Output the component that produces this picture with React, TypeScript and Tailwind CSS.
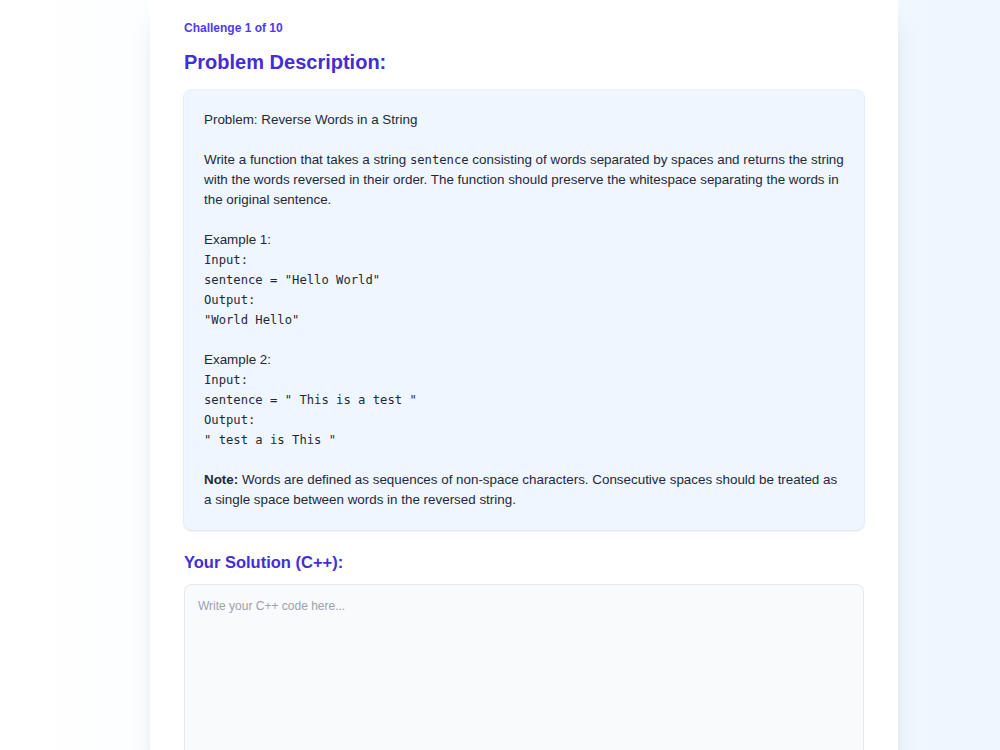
import React, { useState } from 'react';

const mono = { fontFamily: '"DejaVu Sans Mono", monospace' };

const Code = ({ children }: { children: React.ReactNode }) => (
  <code className="text-[12.2px]" style={mono}>
    {children}
  </code>
);

const CodeLine = ({ children }: { children: React.ReactNode }) => (
  <div className="whitespace-pre text-[12.2px] leading-5" style={mono}>
    {children}
  </div>
);

const App = () => {
  const [code, setCode] = useState('');

  return (
    <div
      className="min-h-screen bg-gradient-to-r from-white to-blue-50"
      style={{ fontFamily: '"Liberation Sans", Arial, sans-serif' }}
    >
      <div className="ml-[150px] w-[748px] min-h-screen bg-white shadow-xl px-[34px] pt-[20px] pb-10">
        <div className="text-xs font-bold text-indigo-600">Challenge 1 of 10</div>

        <h2 className="mt-[12px] text-xl font-bold text-indigo-700">Problem Description:</h2>

        <div className="mt-[14px] rounded-lg bg-blue-50 p-5 text-[13.4px] leading-5 text-gray-800 shadow-sm ring-1 ring-blue-100/60">
          <p>Problem: Reverse Words in a String</p>
          <br />
          <p>
            Write a function that takes a string <Code>sentence</Code> consisting of words separated by
            spaces and returns the string with the words reversed in their order. The function should
            preserve the whitespace separating the words in the original sentence.
          </p>
          <br />
          <p>Example 1:</p>
          <CodeLine>Input:</CodeLine>
          <CodeLine>sentence = "Hello World"</CodeLine>
          <CodeLine>Output:</CodeLine>
          <CodeLine>"World Hello"</CodeLine>
          <br />
          <p>Example 2:</p>
          <CodeLine>Input:</CodeLine>
          <CodeLine>sentence = " This is a test "</CodeLine>
          <CodeLine>Output:</CodeLine>
          <CodeLine>" test a is This "</CodeLine>
          <br />
          <p>
            <strong>Note:</strong> Words are defined as sequences of non-space characters. Consecutive
            spaces should be treated as a single space between words in the reversed string.
          </p>
        </div>

        <h3 className="mt-[18px] text-[16.5px] leading-7 font-bold text-indigo-700">Your Solution (C++):</h3>

        <textarea
          value={code}
          onChange={(e) => setCode(e.target.value)}
          placeholder="Write your C++ code here..."
          className="mt-2 block h-[320px] w-full resize-none rounded-lg border border-gray-200 bg-gray-50 px-[13px] py-3 text-xs leading-[18px] text-gray-800 placeholder:text-gray-400 focus:outline-none"
        />
      </div>
    </div>
  );
};

export default App;
